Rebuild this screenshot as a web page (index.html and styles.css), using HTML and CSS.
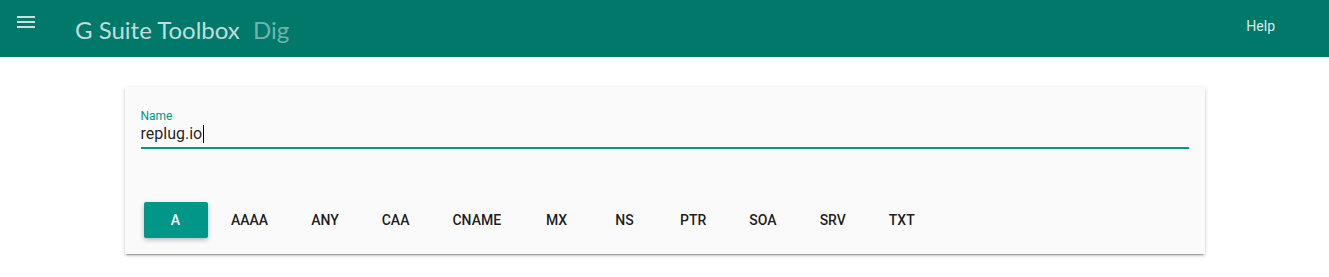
FILE: index.html
```html
<!DOCTYPE html>
<html lang="en">
<head>
    <meta charset="UTF-8">
    <meta name="viewport" content="width=device-width, initial-scale=1.0">
    <title>G Suite Toolbox - Dig</title>
    <link rel="stylesheet" href="styles.css">
</head>
<body>
    <header class="toolbar">
        <button class="menu-btn" aria-label="Menu">
            <svg viewBox="0 0 24 24" width="24" height="24">
                <path d="M3 18h18v-2H3v2zm0-5h18v-2H3v2zm0-7v2h18V6H3z"></path>
            </svg>
        </button>
        <div class="brand">G Suite Toolbox <span class="brand-sub">Dig</span></div>
        <div class="spacer"></div>
        <a class="help" href="#">Help</a>
    </header>

    <main class="content">
        <div class="card">
            <div class="field">
                <label for="name-input">Name</label>
                <div class="input" id="name-input">replug.io<span class="caret"></span></div>
            </div>

            <div class="types">
                <button class="type-btn active">A</button>
                <button class="type-btn">AAAA</button>
                <button class="type-btn">ANY</button>
                <button class="type-btn">CAA</button>
                <button class="type-btn">CNAME</button>
                <button class="type-btn">MX</button>
                <button class="type-btn">NS</button>
                <button class="type-btn">PTR</button>
                <button class="type-btn">SOA</button>
                <button class="type-btn">SRV</button>
                <button class="type-btn">TXT</button>
            </div>
        </div>
    </main>
</body>
</html>
```

FILE: styles.css
```css
body {
    margin: 0;
    font-family: Roboto, "Liberation Sans", Arial, sans-serif;
    background-color: #fff;
    color: rgba(0, 0, 0, 0.87);
}

/* Top bar */
.toolbar {
    display: flex;
    align-items: flex-start;
    height: 57px;
    background-color: #00796b;
    padding: 0 54px 0 14px;
    box-sizing: border-box;
}

.menu-btn {
    margin-top: 10px;
    padding: 0;
    border: none;
    background: none;
    width: 24px;
    height: 24px;
    cursor: pointer;
}

.menu-btn svg {
    display: block;
    fill: rgba(255, 255, 255, 0.78);
}

.brand {
    margin: 15px 0 0 37px;
    font-family: Lato, "Open Sans", sans-serif;
    font-size: 24px;
    line-height: 29px;
    color: rgba(255, 255, 255, 0.75);
}

.brand-sub {
    margin-left: 7px;
    color: rgba(255, 255, 255, 0.45);
}

.spacer {
    flex: 1;
}

.help {
    margin-top: 16px;
    font-size: 14px;
    line-height: 20px;
    color: rgba(255, 255, 255, 0.87);
    text-decoration: none;
}

/* Main card */
.content {
    padding: 30px 0 23px;
}

.card {
    width: 1080px;
    margin: 0 auto;
    box-sizing: border-box;
    padding: 22px 16px 16px;
    background-color: #fafafa;
    box-shadow: 0 2px 2px rgba(0, 0, 0, 0.14), 0 1px 5px rgba(0, 0, 0, 0.12), 0 3px 1px -2px rgba(0, 0, 0, 0.2);
}

.field label {
    display: block;
    font-size: 12px;
    line-height: 15px;
    color: #009688;
}

.field .input {
    font-size: 16px;
    line-height: 20px;
    padding-bottom: 3px;
    border-bottom: 2px solid #009688;
}

.caret {
    display: inline-block;
    width: 1px;
    height: 18px;
    margin-left: 1px;
    vertical-align: -4px;
    background-color: #000;
}

/* Record type buttons */
.types {
    display: flex;
    gap: 4px;
    margin-top: 53px;
    padding-left: 3px;
}

.type-btn {
    min-width: 64px;
    height: 36px;
    padding: 0 19.5px;
    border: none;
    border-radius: 2px;
    background: transparent;
    font-family: Roboto, sans-serif;
    font-size: 14px;
    font-weight: 500;
    color: rgba(0, 0, 0, 0.9);
    cursor: pointer;
}

.type-btn.active {
    background-color: #009688;
    color: #fff;
    box-shadow: 0 2px 5px rgba(0, 0, 0, 0.26);
}
```
